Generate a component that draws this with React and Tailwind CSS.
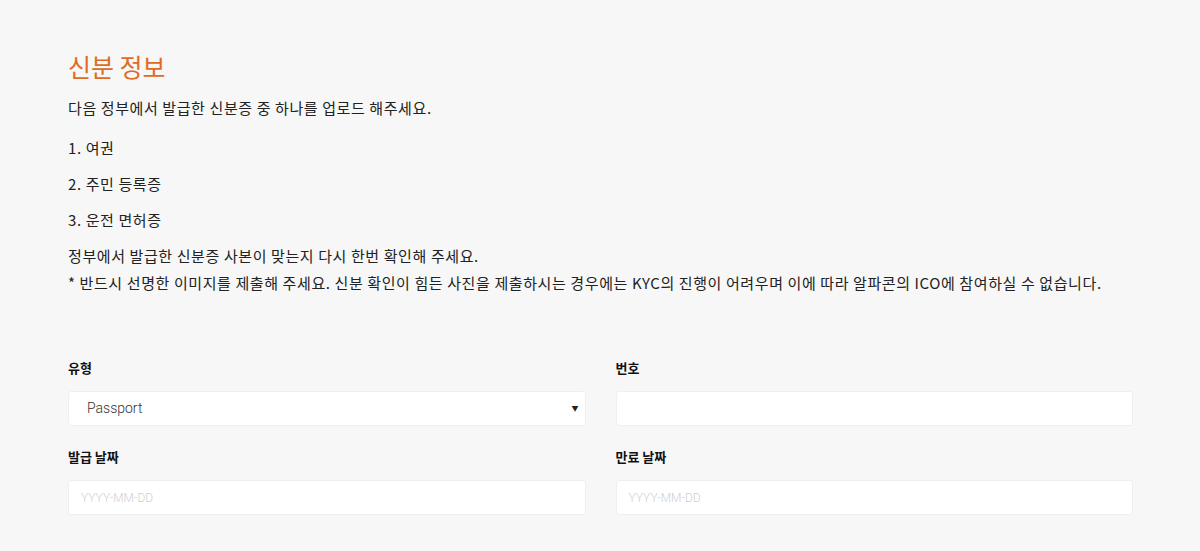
import React from "react";

const font = { fontFamily: '"Noto Sans CJK KR", "Noto Sans", sans-serif' };
const roboto = { fontFamily: 'Roboto, "Noto Sans", sans-serif' };

function Field({ label, children }) {
  return (
    <div className="flex flex-col">
      <label className="text-[13px] font-bold text-[#111] leading-[20px] mb-[13px]">{label}</label>
      {children}
    </div>
  );
}

export default function App() {
  return (
    <div className="min-h-[551px] w-full bg-[#f7f7f7] text-[#222]" style={font}>
      <div className="pl-[68px] pr-[67px] pt-[48px]">
        <h2 className="text-[25px] leading-[36px] text-[#de6c24] font-normal mb-[10px]">신분 정보</h2>
        <div className="text-[15px] leading-[27px] tracking-[0.6px]">
          <p className="mb-[13px]">다음 정부에서 발급한 신분증 중 하나를 업로드 해주세요.</p>
          <p className="mb-[9px]">1. 여권</p>
          <p className="mb-[9px]">2. 주민 등록증</p>
          <p className="mb-[9px]">3. 운전 면허증</p>
          <p>
            정부에서 발급한 신분증 사본이 맞는지 다시 한번 확인해 주세요.
            <br />* 반드시 선명한 이미지를 제출해 주세요. 신분 확인이 힘든 사진을 제출하시는 경우에는 KYC의 진행이 어려우며 이에 따라 알파콘의 ICO에 참여하실 수 없습니다.
          </p>
        </div>
        <div className="mt-[62px] grid grid-cols-2 gap-x-[30px] gap-y-[21px]">
          <Field label="유형">
            <div className="relative h-[35px] bg-white border border-[#efefef] rounded-[3px] flex items-center pl-[18px] pr-[6px]">
              <span className="text-[14px] text-[#333] font-light" style={roboto}>Passport</span>
              <span className="ml-auto text-[7px] text-[#222]">▼</span>
            </div>
          </Field>
          <Field label="번호">
            <div className="h-[35px] bg-white border border-[#efefef] rounded-[3px]" />
          </Field>
          <Field label="발급 날짜">
            <div className="h-[35px] bg-white border border-[#efefef] rounded-[3px] flex items-center pl-[12px]">
              <span className="text-[12px] text-[#cfcfcf] font-light" style={roboto}>YYYY-MM-DD</span>
            </div>
          </Field>
          <Field label="만료 날짜">
            <div className="h-[35px] bg-white border border-[#efefef] rounded-[3px] flex items-center pl-[12px]">
              <span className="text-[12px] text-[#cfcfcf] font-light" style={roboto}>YYYY-MM-DD</span>
            </div>
          </Field>
        </div>
      </div>
    </div>
  );
}
